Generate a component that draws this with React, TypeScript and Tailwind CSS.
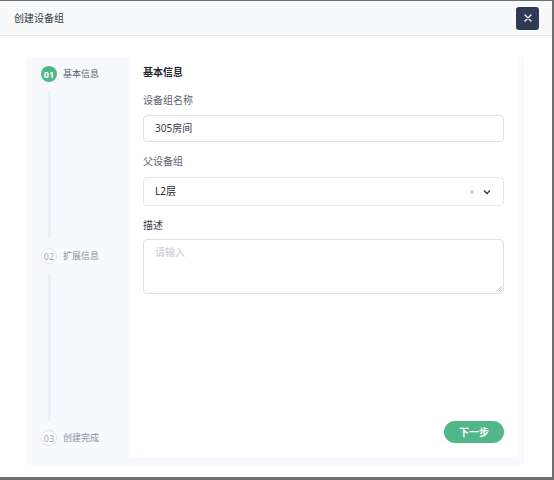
import React from "react";

const font = { fontFamily: '"Noto Sans", "Noto Sans CJK SC", sans-serif' };

function StepCircle({ n, active }: { n: string; active?: boolean }) {
  return active ? (
    <div className="w-[16px] h-[16px] rounded-full bg-[#4fb985] text-white text-[9px] font-bold flex items-center justify-center leading-none">
      {n}
    </div>
  ) : (
    <div className="w-[16px] h-[16px] rounded-full border border-[#dfe3ea] bg-white text-[#9aa1ad] text-[9px] flex items-center justify-center leading-none">
      {n}
    </div>
  );
}

export default function App() {
  return (
    <div className="w-[554px] h-[480px] bg-[#6e6e6e] pt-[1px]" style={font}>
      <div className="w-[552px] h-[476px] bg-white flex flex-col">
        <div className="h-[35px] bg-[#f8f9fb] border-b border-[#e4e7ec] flex items-center justify-between pl-[14px] pr-[13px] shrink-0">
          <span className="text-[10px] text-[#333a45]">创建设备组</span>
          <button className="w-[23px] h-[23px] rounded-[3px] bg-[#2e3b57] flex items-center justify-center">
            <svg width="8" height="8" viewBox="0 0 8 8">
              <path d="M1 1L7 7M7 1L1 7" stroke="#ffffff" strokeWidth="1.3" strokeLinecap="round" />
            </svg>
          </button>
        </div>
        <div className="flex-1 pt-[21px] pl-[27px] pr-[28px] pb-[12px]">
          <div className="h-full bg-[#f7f9fc] flex">
            <div className="w-[103px] shrink-0 pl-[14px] pt-[9px] pb-[19px] flex flex-col">
              <div className="flex items-center gap-[6px]">
                <StepCircle n="01" active />
                <span className="text-[9px] text-[#5c6370]">基本信息</span>
              </div>
              <div className="flex-1 ml-[7px] w-[3px] bg-[#eaf0f7] my-[9px]" />
              <div className="flex items-center gap-[6px]">
                <StepCircle n="02" />
                <span className="text-[9px] text-[#8a919c]">扩展信息</span>
              </div>
              <div className="flex-1 ml-[7px] w-[3px] bg-[#eaf0f7] my-[9px]" />
              <div className="flex items-center gap-[6px]">
                <StepCircle n="03" />
                <span className="text-[9px] text-[#8a919c]">创建完成</span>
              </div>
            </div>
            <div className="flex-1 bg-white mb-[8px] mr-[7px] pl-[13px] pr-[13px] pt-[8px] pb-[14px] flex flex-col">
              <div className="text-[10px] font-bold text-[#222831] leading-[14px]">基本信息</div>
              <div className="text-[10px] text-[#5b6270] mt-[14px] leading-[14px]">设备组名称</div>
              <div className="mt-[8px] h-[27px] border border-[#dde1e8] rounded-[4px] flex items-center px-[11px] text-[10px] text-[#333a45]">
                305房间
              </div>
              <div className="text-[10px] text-[#5b6270] mt-[12px] leading-[14px]">父设备组</div>
              <div className="mt-[9px] h-[29px] border border-[#e4e7ec] rounded-[4px] flex items-center pl-[11px] pr-[12px] text-[10px] text-[#222831]">
                <span className="flex-1">L2层</span>
                <svg width="6" height="6" viewBox="0 0 6 6" className="mr-[8px]">
                  <path d="M1 1L5 5M5 1L1 5" stroke="#b0b5bd" strokeWidth="0.9" />
                </svg>
                <svg width="8" height="6" viewBox="0 0 8 6">
                  <path d="M1 1.5L4 4.5L7 1.5" stroke="#333a45" strokeWidth="1.4" fill="none" />
                </svg>
              </div>
              <div className="text-[10px] text-[#333a45] mt-[12px] leading-[14px]">描述</div>
              <div className="relative mt-[7px] h-[55px] border border-[#dde1e8] rounded-[4px] px-[11px] pt-[5px] text-[10px] text-[#c4c8cf]">
                请输入
                <svg width="6" height="6" viewBox="0 0 6 6" className="absolute right-[1px] bottom-[1px]">
                  <path d="M5.5 0.5L0.5 5.5M5.5 2.5L2.5 5.5M5.5 4.5L4.5 5.5" stroke="#9aa0a8" strokeWidth="0.7" />
                </svg>
              </div>
              <div className="flex-1" />
              <div className="flex justify-end">
                <button className="w-[60px] h-[22px] rounded-full bg-[#52b788] text-white text-[10px] font-bold">
                  下一步
                </button>
              </div>
            </div>
          </div>
        </div>
      </div>
    </div>
  );
}
